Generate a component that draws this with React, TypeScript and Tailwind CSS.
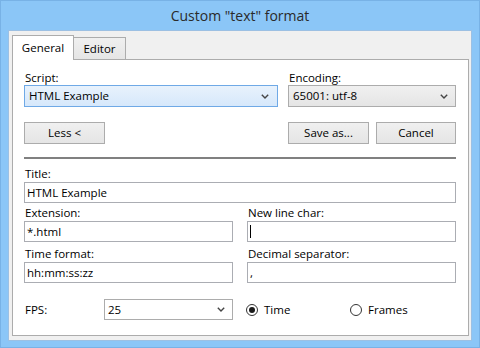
import React from "react";

const font = { fontFamily: '"Open Sans", "Noto Sans", Arial, sans-serif' };

function Chevron() {
    return (
        <svg width="8" height="5" viewBox="0 0 8 5" className="shrink-0">
            <polyline points="0.8,0.8 4,4 7.2,0.8" fill="none" stroke="#444" strokeWidth="1.4" />
        </svg>
    );
}

function Label({ text }: { text: string }) {
    return <div className="h-[16px] leading-[16px] pl-px text-[11.5px] text-black">{text}</div>;
}

function TextBox({ value, cursor }: { value?: string; cursor?: boolean }) {
    return (
        <div className="h-[21px] bg-white border border-[#abadb3] flex items-center pl-[2px] text-[11.5px] text-black">
            {cursor ? <span className="w-px h-[13px] bg-black" /> : value}
        </div>
    );
}

function Button({ text, w }: { text: string; w: string }) {
    return (
        <div className={`${w} h-[22px] border border-[#acacac] bg-gradient-to-b from-[#f0f0f0] to-[#e5e5e5] flex items-center justify-center text-[11.5px] text-black`}>
            {text}
        </div>
    );
}

function Radio({ label, checked }: { label: string; checked?: boolean }) {
    return (
        <div className="flex items-center gap-[6px] text-[11.5px] text-black">
            <div className="w-[12px] h-[12px] rounded-full border border-[#333] bg-white flex items-center justify-center">
                {checked && <div className="w-[6px] h-[6px] rounded-full bg-[#1a1a1a]" />}
            </div>
            {label}
        </div>
    );
}

export default function App() {
    return (
        <div style={font} className="w-[480px] h-[348px] bg-[#8bc6f7] border border-[#78b2e6] flex flex-col overflow-hidden">
            {/* title bar */}
            <div className="h-[29px] flex items-center justify-center text-[14px] text-[#2a2a2a]">
                Custom "text" format
            </div>

            {/* client area */}
            <div className="mx-[7px] h-[311px] bg-[#f0f0f0] border border-[#9cc0e3] pl-[3px] pt-[4px]">
                <div className="flex items-end h-[24px]">
                    <div className="relative z-10 w-[62px] h-[25px] -mb-px bg-white border border-b-0 border-[#acacac] flex items-center justify-center text-[11.5px] text-black">
                        General
                    </div>
                    <div className="w-[52px] h-[22px] bg-gradient-to-b from-[#f0f0f0] to-[#e5e5e5] border border-l-0 border-b-0 border-[#acacac] flex items-center justify-center text-[11.5px] text-black">
                        Editor
                    </div>
                </div>

                <div className="w-[457px] h-[277px] bg-white border border-[#acacac] pl-[11px] pt-[10px]">
                    {/* script / encoding */}
                    <div className="flex gap-[10px]">
                        <div className="w-[254px]">
                            <div className="h-[15px] leading-[15px] pl-px text-[11.5px] text-black">Script:</div>
                            <div className="h-[22px] border border-[#6fa9e6] bg-gradient-to-b from-[#e8f2fc] to-[#d6e8fb] flex items-center justify-between pl-[4px] pr-[8px] text-[11.5px] text-black">
                                HTML Example
                                <Chevron />
                            </div>
                        </div>
                        <div className="w-[168px]">
                            <div className="h-[15px] leading-[15px] pl-px text-[11.5px] text-black">Encoding:</div>
                            <div className="h-[22px] border border-[#acacac] bg-gradient-to-b from-[#f0f0f0] to-[#e5e5e5] flex items-center justify-between pl-[4px] pr-[7px] text-[11.5px] text-black">
                                65001: utf-8
                                <Chevron />
                            </div>
                        </div>
                    </div>

                    {/* buttons */}
                    <div className="flex mt-[15px] w-[432px]">
                        <Button text="Less <" w="w-[81px]" />
                        <div className="ml-auto flex gap-[7px]">
                            <Button text="Save as..." w="w-[81px]" />
                            <Button text="Cancel" w="w-[80px]" />
                        </div>
                    </div>

                    <div className="mt-[13px] w-[432px] h-[2px] bg-[#808080]" />

                    <div className="mt-[7px] w-[432px]">
                        <Label text="Title:" />
                        <TextBox value="HTML Example" />
                    </div>

                    <div className="grid grid-cols-[209px_209px] gap-x-[14px] w-[432px]">
                        <div className="mt-[2px]">
                            <Label text="Extension:" />
                            <TextBox value="*.html" />
                        </div>
                        <div className="mt-[2px]">
                            <Label text="New line char:" />
                            <TextBox cursor />
                        </div>
                        <div className="mt-[4px]">
                            <Label text="Time format:" />
                            <TextBox value="hh:mm:ss:zz" />
                        </div>
                        <div className="mt-[4px]">
                            <Label text="Decimal separator:" />
                            <TextBox value="," />
                        </div>

                        <div className="mt-[16px] flex items-center">
                            <div className="w-[80px] pl-px text-[11.5px] text-black">FPS:</div>
                            <div className="w-[129px] h-[21px] bg-white border border-[#acacac] flex items-center justify-between pl-[3px] pr-[7px] text-[11.5px] text-black">
                                25
                                <Chevron />
                            </div>
                        </div>
                        <div className="mt-[16px] flex items-center -ml-px">
                            <div className="w-[104px]">
                                <Radio label="Time" checked />
                            </div>
                            <Radio label="Frames" />
                        </div>
                    </div>
                </div>
            </div>
        </div>
    );
}
